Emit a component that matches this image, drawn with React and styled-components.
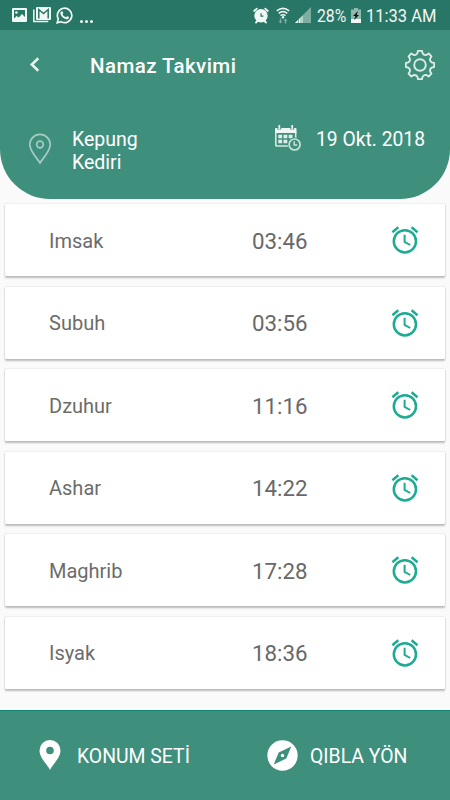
import React from 'react';
import styled, { createGlobalStyle } from 'styled-components';

const GlobalStyle = createGlobalStyle`
  * {
    box-sizing: border-box;
  }

  body {
    margin: 0;
    background: #fafafa;
    font-family: Roboto, 'Liberation Sans', sans-serif;
  }

  svg {
    display: block;
    flex-shrink: 0;
  }
`;

const Screen = styled.div`
  display: flex;
  flex-direction: column;
  width: 450px;
  height: 800px;
  overflow: hidden;
  background: #fafafa;
`;

const StatusBar = styled.div`
  display: flex;
  align-items: center;
  justify-content: space-between;
  height: 30px;
  flex-shrink: 0;
  padding: 0 12px;
  background: #287665;
  color: #fff;
`;

const StatusGroup = styled.div`
  display: flex;
  align-items: center;
  height: 30px;
`;

const StatusIcon = styled.span`
  margin-left: ${props => props.$gap || 0}px;
`;

const StatusText = styled.span`
  width: ${props => props.$width}px;
  margin-left: ${props => props.$gap}px;
  font-size: 19px;
  line-height: 30px;
  padding-top: 1px;
  white-space: nowrap;
  color: #f1f7f5;
  transform: scaleX(${props => props.$squeeze});
  transform-origin: left center;
`;

const Dots = styled.span`
  display: flex;
  gap: 2px;
  margin: 12px 0 0 6.5px;

  i {
    width: 3px;
    height: 3px;
    border-radius: 50%;
    background: #f1f7f5;
  }
`;

const Header = styled.header`
  height: 168.5px;
  flex-shrink: 0;
  background: #3f8f7d;
  border-radius: 0 0 50px 50px;
  color: #fff;
`;

const TitleRow = styled.div`
  display: flex;
  align-items: center;
  height: 70px;
  padding: 0 15px 0 29px;
`;

const Title = styled.h1`
  flex: 1;
  margin: 2px 0 0 49px;
  font-size: 20.5px;
  font-weight: 500;
  line-height: 26px;
  letter-spacing: 0.42px;
`;

const InfoRow = styled.div`
  display: flex;
  align-items: flex-start;
  padding: 28px 25px 0 28px;
`;

const PinHolder = styled.div`
  padding-top: 5px;
`;

const CalendarHolder = styled.div`
  margin-top: -3px;
`;

const Place = styled.div`
  flex: 1;
  margin-left: 20px;
  padding-top: 1px;
  font-size: 19.5px;
  line-height: 22.5px;
`;

const DateText = styled.div`
  width: 109px;
  margin-left: 15px;
  padding-top: 1px;
  font-size: 19.3px;
  line-height: 22.5px;
  white-space: nowrap;
`;

const Times = styled.main`
  display: flex;
  flex-direction: column;
  flex: 1;
  gap: 10.5px;
  padding: 5.5px 5px 0;
`;

const TimeCard = styled.div`
  display: grid;
  grid-template-columns: 203px 1fr 28px;
  align-items: center;
  height: 72px;
  flex-shrink: 0;
  padding: 0 26px 0 44px;
  background: #fff;
  border-radius: 1px;
  box-shadow: 0 1.5px 2px rgba(0, 0, 0, 0.24), 0 0 1.5px rgba(0, 0, 0, 0.18);
`;

const PrayerName = styled.span`
  padding-top: 1.4px;
  font-size: 20px;
  color: #6c6c6c;
`;

const PrayerTime = styled.span`
  padding-top: 1.4px;
  font-size: 22.3px;
  color: #686868;
`;

const Footer = styled.footer`
  display: flex;
  height: 90px;
  flex-shrink: 0;
  border-top: 1px solid #11836e;
  background: #3f8f7d;
`;

const FooterButton = styled.button`
  display: flex;
  align-items: center;
  gap: ${props => props.$gap}px;
  width: 225px;
  padding: 0 0 1px ${props => props.$inset}px;
  border: 0;
  background: none;
  color: #fff;
  font-family: inherit;
  font-size: 19.4px;
  line-height: 26px;

  span {
    padding-top: 3px;
  }
`;

const PictureIcon = () => (
    <svg width="15" height="15" viewBox="0 0 15 15">
        <path fill="#f1f7f5" fillRule="evenodd" d="M1 0h13q1 0 1 1v12q0 1-1 1H1q-1 0-1-1V1q0-1 1-1zM2 2v8.500l2.700-2.500 2 1.500L10 6l3 3V2z" />
        <circle cx="4.400" cy="4.500" r="1.300" fill="#f1f7f5" />
    </svg>
);

const MailStackIcon = () => (
    <svg width="18" height="16" viewBox="0 0 18 16">
        <path d="M.8 2.500v12h14.500" fill="none" stroke="#f1f7f5" strokeWidth="1.500" />
        <path d="M4 0h13q1 0 1 1v11q0 1-1 1H4q-1 0-1-1V1q0-1 1-1z" fill="#f1f7f5" />
        <path d="M5.800 11.500V2.500l4.700 4 4.700-4v9" fill="none" stroke="#287665" strokeWidth="1.500" />
    </svg>
);

const ChatIcon = () => (
    <svg width="17" height="17" viewBox="0 0 24 24">
        <path fill="none" stroke="#f1f7f5" strokeWidth="2.400" d="M1.700 22.300l1.500-5.500A10.200 10.200 0 1 1 7.200 20.800z" />
        <path fill="#f1f7f5" d="M8.500 6c.5 0 .7.1.9.6l.8 2c.2.5-.7 1.100-.9 1.500-.2.500 2.200 3.400 4.800 4.200.5 0 1.100-1.500 1.600-1.400l2.200 1c.5.300.4.700.3 1.300-.4 1.700-2.400 2.400-3.900 2.100C10.500 16.600 6.600 12.500 6.100 9.300 5.900 7.700 7.200 6 8.500 6z" />
    </svg>
);

const StatusAlarmIcon = () => (
    <svg width="16" height="17" viewBox="0 0 16 17">
        <path d="M1.200 4l2.600-2.400M14.800 4l-2.600-2.400M3 15.500l2-2M13 15.500l-2-2" stroke="#f1f7f5" strokeWidth="1.800" strokeLinecap="round" />
        <circle cx="8" cy="8.800" r="6.700" fill="#f1f7f5" />
        <path d="M8 6.200v3h2.400" fill="none" stroke="#287665" strokeWidth="1.200" />
    </svg>
);

const WifiIcon = () => (
    <svg width="14" height="17" viewBox="0 0 14 17">
        <g fill="none" stroke="#eef5f3" strokeWidth="1.600">
            <path d="M.8 3.800q6.200-5 12.400 0" />
            <path d="M2.700 6.300q4.300-3.300 8.600 0" />
            <path d="M4.500 8.600q2.500-1.800 5 0" />
        </g>
        <circle cx="7" cy="10.300" r="1.200" fill="#eef5f3" />
        <path d="M4.500 16.500l-2-2.300h1.300v-2.700h1.400v2.700h1.300zM9.500 11.500l2 2.300h-1.300v2.700H8.800v-2.700H7.500z" fill="#7eada2" />
    </svg>
);

const SignalIcon = () => (
    <svg width="16" height="16" viewBox="0 0 16 16">
        <path d="M0 16L16 0v16z" fill="#7eada2" />
        <path d="M0 16L7.500 8.500V16z" fill="#f1f7f5" />
        <path d="M3.500 10v6M6 8v8" stroke="#287665" strokeWidth=".6" />
    </svg>
);

const BatteryIcon = () => (
    <svg width="10" height="15" viewBox="0 0 10 15">
        <path d="M3 0h4v1.500h3V15H0V1.500h3z" fill="#8fb8af" />
        <path d="M0 11h10v4H0z" fill="#f1f7f5" />
        <path d="M7 3L2 8h2.500L3 12 8 7H5.700z" fill="#111" />
    </svg>
);

const BackIcon = () => (
    <svg width="12" height="16" viewBox="0 0 12 16">
        <path d="M9.300 1.200L2.800 7.500l6.500 6.300" fill="none" stroke="#e6f1ee" strokeWidth="2.600" />
    </svg>
);

const GearIcon = () => {
    // one tooth and the valley after it, repeated every 45 degrees
    const tooth = [[-2.6, -11.6], [-2, -14.2], [2, -14.2], [2.6, -11.6], [4.1, -10.2]];
    const points = [];

    for (let i = 0; i < 8; i++) {
        const angle = (i * Math.PI) / 4;
        tooth.forEach(([x, y]) => {
            points.push([
                (15 + x * Math.cos(angle) - y * Math.sin(angle)).toFixed(2),
                (15 + x * Math.sin(angle) + y * Math.cos(angle)).toFixed(2)
            ].join(','));
        });
    }

    return (
        <svg width="30" height="30" viewBox="0 0 30 30">
            <g fill="none" stroke="#dcebe7" strokeWidth="1.900" strokeLinejoin="round">
                <polygon points={points.join(' ')} />
                <circle cx="15" cy="15" r="5.800" />
            </g>
        </svg>
    );
};

const PinOutlineIcon = () => (
    <svg width="24" height="32" viewBox="0 0 24 32">
        <g fill="none" stroke="#a5cbc2" strokeWidth="1.700">
            <path d="M12 30C9.500 25.500 1.800 18.500 1.800 11.500a10.200 10.200 0 0 1 20.400 0c0 7-7.700 14-10.200 18.500z" />
            <circle cx="12" cy="11.500" r="3.300" />
        </g>
    </svg>
);

const CalendarClockIcon = () => (
    <svg width="26" height="27" viewBox="0 0 26 27">
        <path d="M.8 7v13.200q0 .8.800.8H14M20.700 7v6" fill="none" stroke="#d6e7e3" strokeWidth="1.600" />
        <path d="M1 3h19.500q1 0 1 1v4H0V4q0-1 1-1z" fill="#eff6f4" />
        <path d="M4.300 0v4.500M17.200 0v4.500" stroke="#3f8f7d" strokeWidth="3.800" />
        <path d="M4.300 0v4.300M17.200 0v4.300" stroke="#eff6f4" strokeWidth="1.700" />
        <path d="M3.300 9.800h3.800v3.400H3.300zM8.500 9.800h3.800v3.400H8.500zM13.700 9.800h3.800v3.400h-3.800zM3.300 14.800h3.800v3.400H3.300zM8.500 14.800h3.800v3.400H8.500z" fill="#dfece9" />
        <circle cx="19.600" cy="19.500" r="7" fill="#3f8f7d" />
        <circle cx="19.600" cy="19.500" r="5.500" fill="none" stroke="#cce1dc" strokeWidth="1.700" />
        <path d="M19.200 16.300v3.600h3" fill="none" stroke="#cce1dc" strokeWidth="1.500" />
    </svg>
);

const AlarmIcon = () => (
    <svg width="28" height="30" viewBox="0 0 28 30">
        <g fill="none" stroke="#1dab92" strokeWidth="2.500">
            <circle cx="13.900" cy="16.300" r="11.100" />
            <path d="M1.400 7.200l5.900-4.900M26.500 7.200l-5.900-4.900" />
            <path d="M13.600 9.800v7l5.600 3.200" strokeWidth="2" />
        </g>
    </svg>
);

const PinIcon = () => (
    <svg width="22" height="30" viewBox="0 0 22 30">
        <path fill="#fff" fillRule="evenodd" d="M11 0A10.500 10.500 0 0 0 .5 10.500C.5 18 8.500 24.500 11 30c2.500-5.500 10.500-12 10.500-19.500A10.500 10.500 0 0 0 11 0zm0 6.700a3.800 3.800 0 1 1 0 7.600 3.800 3.800 0 0 1 0-7.600z" />
    </svg>
);

const CompassIcon = () => (
    <svg width="31" height="31" viewBox="0 0 31 31">
        <circle cx="15.500" cy="15.500" r="15.200" fill="#fff" />
        <path d="M24.300 6.500L19.300 18.500 6.700 24.500 11.700 12.500z" fill="#3f8f7d" />
        <circle cx="15.500" cy="15.500" r="1.700" fill="#fff" />
    </svg>
);

const prayers = [
    { name: 'Imsak', time: '03:46' },
    { name: 'Subuh', time: '03:56' },
    { name: 'Dzuhur', time: '11:16' },
    { name: 'Ashar', time: '14:22' },
    { name: 'Maghrib', time: '17:28' },
    { name: 'Isyak', time: '18:36' }
];

const App = () => (
    <Screen>
        <GlobalStyle />
        <StatusBar>
            <StatusGroup>
                <StatusIcon><PictureIcon /></StatusIcon>
                <StatusIcon $gap={6}><MailStackIcon /></StatusIcon>
                <StatusIcon $gap={5}><ChatIcon /></StatusIcon>
                <Dots><i /><i /><i /></Dots>
            </StatusGroup>
            <StatusGroup>
                <StatusIcon><StatusAlarmIcon /></StatusIcon>
                <StatusIcon $gap={7}><WifiIcon /></StatusIcon>
                <StatusIcon $gap={5}><SignalIcon /></StatusIcon>
                <StatusText $gap={6} $width={29} $squeeze={0.83}>28%</StatusText>
                <StatusIcon $gap={5}><BatteryIcon /></StatusIcon>
                <StatusText $gap={5} $width={72} $squeeze={0.87}>11:33 AM</StatusText>
            </StatusGroup>
        </StatusBar>

        <Header>
            <TitleRow>
                <BackIcon />
                <Title>Namaz Takvimi</Title>
                <GearIcon />
            </TitleRow>
            <InfoRow>
                <PinHolder><PinOutlineIcon /></PinHolder>
                <Place>Kepung<br />Kediri</Place>
                <CalendarHolder><CalendarClockIcon /></CalendarHolder>
                <DateText>19 Okt. 2018</DateText>
            </InfoRow>
        </Header>

        <Times>
            {prayers.map(prayer => (
                <TimeCard key={prayer.name}>
                    <PrayerName>{prayer.name}</PrayerName>
                    <PrayerTime>{prayer.time}</PrayerTime>
                    <AlarmIcon />
                </TimeCard>
            ))}
        </Times>

        <Footer>
            <FooterButton $inset={38.5} $gap={16.5}>
                <PinIcon />
                <span>KONUM SETİ</span>
            </FooterButton>
            <FooterButton $inset={42} $gap={12}>
                <CompassIcon />
                <span>QIBLA YÖN</span>
            </FooterButton>
        </Footer>
    </Screen>
);

export default App;
